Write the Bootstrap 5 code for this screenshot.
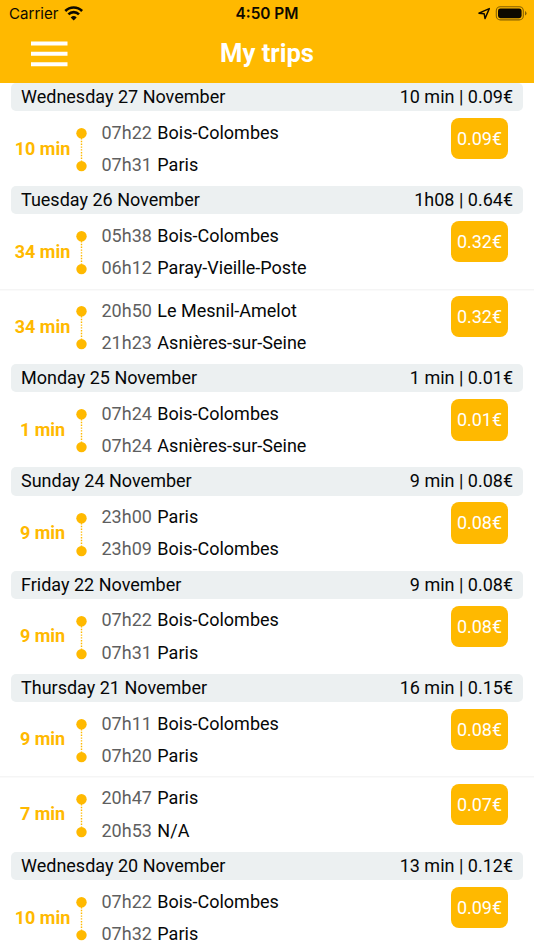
<!DOCTYPE html>
<html lang="en">
<head>
<meta charset="utf-8">
<meta name="viewport" content="width=device-width, initial-scale=1">
<title>My trips</title>
<link href="https://cdn.jsdelivr.net/npm/bootstrap@5.3.0/dist/css/bootstrap.min.css" rel="stylesheet">
<style>
  body { font-family: Roboto, sans-serif; font-size: 18px; line-height: 28px; color: #060708; background: #fff; height: 950px; overflow: hidden; }
  .app-header { background: #ffb900; height: 82.9px; }
  .status-bar { height: 28px; padding: 0 7px 0 9px; font: 500 15.4px/28px Inter, sans-serif; color: #0d0900; }
  .carrier { font-weight: 400; font-size: 15.1px; }
  .clock { font-weight: 600; }
  .title-bar { height: 51px; }
  .screen-title { font-size: 25.6px; font-weight: 700; line-height: 51px; margin: 0; }
  .menu-btn { margin-left: 31px; }
  .day-bar { height: 28.3px; margin: 0 10.6px; padding: 0 10.4px; background: #ecf0f1; border-radius: 5px; }
  .trip { height: 74.9px; }
  .trip + .trip { background: linear-gradient(#f5f5f5, #f5f5f5) 0 0 / 100% 1.5px no-repeat; margin-top: -.6px; height: 75.5px; padding-top: .6px; }
  .duration { width: 76px; padding: 9.4px 0 0 9px; color: #ffb900; font-weight: 700; line-height: 56px; }
  .route { width: 11px; margin-top: 17px; }
  .stops { margin-left: 14.5px; padding-top: 5.5px; line-height: 32.3px; }
  .hour { color: #5f5f5f; margin-right: 1px; }
  .fare { width: 57px; height: 41.4px; margin: 6.7px 26px 0 0; background: #ffb900; color: #fff; border-radius: 8px; line-height: 41px; }
</style>
<script src="https://cdn.jsdelivr.net/npm/bootstrap@5.3.0/dist/js/bootstrap.bundle.min.js"></script>
</head>
<body>
<header class="app-header">
  <div class="status-bar position-relative d-flex align-items-center justify-content-between">
    <div class="d-flex align-items-center">
      <span class="carrier me-1">Carrier</span>
      <svg width="22" height="16" viewBox="0 0 22 16" fill="none" stroke="#0d0900" stroke-width="2.6"><path d="M3.3 5a11.8 11.8 0 0 1 16.8 0M6.4 8.3a7.5 7.5 0 0 1 10.6 0"/><path d="M11.7 14.4 8.7 11.4a4.3 4.3 0 0 1 6 0z" fill="#0d0900" stroke="none"/></svg>
    </div>
    <span class="position-absolute start-50 translate-middle-x text-nowrap clock">4:50 PM</span>
    <div class="d-flex align-items-center">
      <svg width="50" height="18" viewBox="0 0 50 18"><path d="M1.9 8.2 12.3 3.6 8 13.6 7.2 8.8z" fill="none" stroke="#0d0900" stroke-width="1.4" stroke-linejoin="round"/><rect x="19.3" y="1.7" width="27" height="13.2" rx="4" fill="none" stroke="#0d0900" stroke-opacity=".5" stroke-width="1.1"/><rect x="21" y="3.4" width="23.6" height="9.8" rx="2.4" fill="#0d0900"/><path d="M48 6v4.6q1.5-.7 1.5-2.3T48 6" fill="#0d0900" fill-opacity=".5"/></svg>
    </div>
  </div>
  <div class="title-bar position-relative d-flex align-items-center">
    <a href="#" class="menu-btn d-flex" aria-label="Menu"><svg width="37" height="26" viewBox="0 0 37 26" fill="#fff"><path d="M0 .5h36.5v4H0zM0 10.8h36.5v4H0zM0 21.2h36.5v4H0z"/></svg></a>
    <h1 class="screen-title text-white position-absolute start-50 translate-middle-x text-nowrap">My trips</h1>
  </div>
</header>
<main id="days"></main>

<template id="day-template">
  <section><div class="day-bar d-flex justify-content-between"><span class="day"></span><span class="total"></span></div></section>
</template>
<template id="trip-template">
  <article class="trip d-flex align-items-start">
    <div class="duration text-center text-nowrap"></div>
    <svg class="route flex-shrink-0" width="11" height="44" viewBox="0 0 11 44"><path d="M5.5 10v24" stroke="#ffb900" stroke-width="1.4" stroke-dasharray="1.4 1.4"/><circle cx="5.5" cy="5.2" r="5.2" fill="#ffb900"/><circle cx="5.5" cy="38.1" r="5.2" fill="#ffb900"/></svg>
    <div class="stops flex-grow-1 text-nowrap">
      <div><span class="hour"></span> <span class="place"></span></div>
      <div><span class="hour"></span> <span class="place"></span></div>
    </div>
    <div class="fare text-center"></div>
  </article>
</template>
<script>
  const days = [
    ["Wednesday 27 November", "10 min | 0.09€", [["10 min", "07h22", "Bois-Colombes", "07h31", "Paris", "0.09€"]]],
    ["Tuesday 26 November", "1h08 | 0.64€", [["34 min", "05h38", "Bois-Colombes", "06h12", "Paray-Vieille-Poste", "0.32€"], ["34 min", "20h50", "Le Mesnil-Amelot", "21h23", "Asnières-sur-Seine", "0.32€"]]],
    ["Monday 25 November", "1 min | 0.01€", [["1 min", "07h24", "Bois-Colombes", "07h24", "Asnières-sur-Seine", "0.01€"]]],
    ["Sunday 24 November", "9 min | 0.08€", [["9 min", "23h00", "Paris", "23h09", "Bois-Colombes", "0.08€"]]],
    ["Friday 22 November", "9 min | 0.08€", [["9 min", "07h22", "Bois-Colombes", "07h31", "Paris", "0.08€"]]],
    ["Thursday 21 November", "16 min | 0.15€", [["9 min", "07h11", "Bois-Colombes", "07h20", "Paris", "0.08€"], ["7 min", "20h47", "Paris", "20h53", "N/A", "0.07€"]]],
    ["Wednesday 20 November", "13 min | 0.12€", [["10 min", "07h22", "Bois-Colombes", "07h32", "Paris", "0.09€"]]]
  ];
  const clone = id => document.getElementById(id).content.firstElementChild.cloneNode(true);
  for (const [day, total, trips] of days) {
    const section = clone("day-template");
    section.querySelector(".day").textContent = day;
    section.querySelector(".total").textContent = total;
    for (const [duration, start, from, end, to, fare] of trips) {
      const trip = clone("trip-template");
      const hours = trip.querySelectorAll(".hour"), places = trip.querySelectorAll(".place");
      trip.querySelector(".duration").textContent = duration;
      hours[0].textContent = start; places[0].textContent = from;
      hours[1].textContent = end; places[1].textContent = to;
      trip.querySelector(".fare").textContent = fare;
      section.append(trip);
    }
    document.getElementById("days").append(section);
  }
</script>
</body>
</html>
